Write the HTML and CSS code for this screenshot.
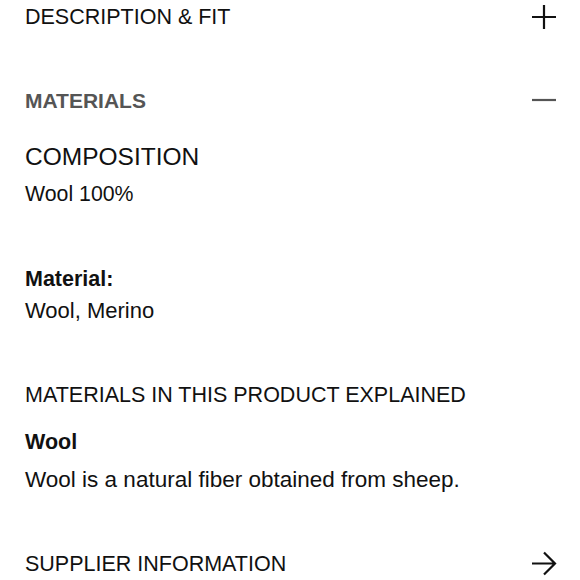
FILE: index.html
```html
<!DOCTYPE html>
<html lang="en">
<head>
<meta charset="utf-8">
<title>Materials</title>
<link rel="stylesheet" href="styles.css">
</head>
<body>
<div class="accordion">
  <div class="acc-head">
    <span class="acc-title">DESCRIPTION &amp; FIT</span>
    <svg class="acc-icon" viewBox="0 0 26 26" width="26" height="26" aria-hidden="true">
      <path d="M13 1V25M1 13H25" fill="none" stroke="#111" stroke-width="2.2"/>
    </svg>
  </div>

  <section class="acc-item">
    <div class="acc-head acc-head-open">
      <span class="acc-title acc-title-open">MATERIALS</span>
      <svg class="acc-icon" viewBox="0 0 26 26" width="26" height="26" aria-hidden="true">
        <path d="M1 12H25" fill="none" stroke="#555" stroke-width="2.2"/>
      </svg>
    </div>
    <div class="acc-body">
      <h3 class="comp-title">COMPOSITION</h3>
      <p class="text text-comp">Wool 100%</p>
      <dl class="material">
        <dt class="label">Material:</dt>
        <dd class="text">Wool, Merino</dd>
      </dl>
      <h3 class="explained-title">MATERIALS IN THIS PRODUCT EXPLAINED</h3>
      <h4 class="label label-wool">Wool</h4>
      <p class="text text-desc">Wool is a natural fiber obtained from sheep.</p>
    </div>
  </section>

  <div class="acc-head acc-head-last">
    <span class="acc-title">SUPPLIER INFORMATION</span>
    <svg class="acc-icon" viewBox="0 0 26 26" width="26" height="26" aria-hidden="true">
      <path d="M1 12.5H24.5M13 1.5L24 12.5L13 23.5" fill="none" stroke="#111" stroke-width="2.2"/>
    </svg>
  </div>
</div>
</body>
</html>
```

FILE: styles.css
```css
html, body {
  margin: 0;
  padding: 0;
  background: #fff;
}

body {
  font-family: "Liberation Sans", Arial, sans-serif;
  color: #111;
  -webkit-font-smoothing: antialiased;
}

.accordion {
  padding: 0 23px 0 25px;
}

.acc-head {
  display: flex;
  justify-content: space-between;
  align-items: center;
  height: 34px;
}

.acc-title {
  font-size: 21.5px;
  line-height: 34px;
  color: #111;
}

.acc-title-open {
  font-weight: bold;
  font-size: 21px;
  color: #555;
}

.acc-head-open {
  margin-top: 50px;
}

.acc-head-last {
  margin-top: 51.5px;
}

.acc-icon {
  display: block;
  flex: none;
}

.acc-body {
  display: flex;
  flex-direction: column;
}

.comp-title {
  margin: 23px 0 0;
  font-weight: normal;
  font-size: 24.5px;
  line-height: 31px;
}

.text {
  margin: 0;
  font-size: 22px;
  line-height: 31px;
}

.comp-title + .text {
  margin-top: 7px;
}

.text-comp {
  font-size: 21.3px;
}

.material {
  margin: 54px 0 0;
}

.label {
  margin: 0;
  font-weight: bold;
  font-size: 21.5px;
  line-height: 31px;
}

.material .text {
  margin: 0;
}

.explained-title {
  margin: 54px 0 0;
  font-weight: normal;
  font-size: 21.5px;
  line-height: 31px;
}

.label-wool {
  margin-top: 16px;
}

.text-desc {
  margin-top: 6px;
  font-size: 22.5px;
}
```
